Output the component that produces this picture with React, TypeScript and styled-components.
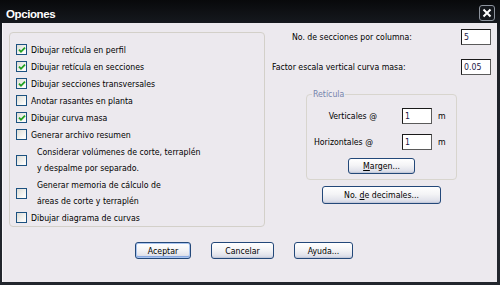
import React from 'react';
import styled, {createGlobalStyle} from 'styled-components';

const GlobalStyle = createGlobalStyle`
  html, body {
    margin: 0;
    padding: 0;
    background: #1b1f25;
  }
  body {
    font-family: "DejaVu Sans Condensed", "Liberation Sans", Arial, sans-serif;
    font-stretch: condensed;
    font-size: 8.7px;
    color: #000;
  }
`;

const Window = styled.div`
  width: 500px;
  height: 285px;
  box-sizing: border-box;
  display: flex;
  flex-direction: column;
  padding: 0 3px 3px;
  background: linear-gradient(#08090b, #1c2027 12%, #22262d);
`;

const TitleBar = styled.div`
  height: 23px;
  display: flex;
  align-items: center;
  justify-content: space-between;
  padding: 0 2px 0 3px;
`;

const Title = styled.span`
  margin-top: 4px;
  font-family: "Liberation Sans", Arial, sans-serif;
  font-weight: bold;
  font-size: 11.5px;
  letter-spacing: -0.4px;
  color: #fff;
`;

const CloseButton = styled.div`
  width: 16px;
  height: 16px;
  margin-top: 3px;
  box-sizing: border-box;
  display: flex;
  align-items: center;
  justify-content: center;
  border: 1px solid #8e949e;
  border-radius: 3px;
  background: #15181d;
`;

const Body = styled.div`
  flex: 1;
  display: flex;
  flex-direction: column;
  padding: 6px 5px 0 6px;
  background: #ece9ee;
  border-left: 1px solid #f8f7f9;
  margin-left: -1px;
`;

const Main = styled.div`
  display: flex;
  align-items: flex-start;
`;

const GroupBox = styled.div`
  width: 256px;
  height: 195px;
  margin-top: 3px;
  box-sizing: border-box;
  padding: 8px 0 0 6px;
  border: 1px solid #d3d0c9;
  border-radius: 4px;
  display: flex;
  flex-direction: column;
`;

const CheckRow = styled.label<{$lines?: number}>`
  display: flex;
  align-items: center;
  height: ${p => (p.$lines === 2 ? 32 : 17)}px;
  margin-top: ${p => (p.$lines === 2 ? 1 : 0)}px;
  white-space: nowrap;
`;

const Box = styled.span`
  width: 11px;
  height: 11px;
  flex: 0 0 11px;
  box-sizing: border-box;
  border: 1px solid #1c5180;
  background: linear-gradient(135deg, #dcdcd6, #fbfbf9 80%);
  display: flex;
  align-items: center;
  justify-content: center;
`;

const CheckText = styled.span<{$lines?: number}>`
  margin-left: ${p => (p.$lines === 2 ? 10 : 4)}px;
  line-height: 16px;
`;

const RightCol = styled.div`
  width: 219px;
  margin-left: 7px;
  display: flex;
  flex-direction: column;
`;

const FieldRow = styled.div<{$top?: number}>`
  display: flex;
  align-items: center;
  height: 16px;
  margin-top: ${p => p.$top || 0}px;
`;

const Label = styled.span<{$width?: number; $pad?: number}>`
  ${p => (p.$width ? `width: ${p.$width}px; flex: 0 0 ${p.$width}px; text-align: right;` : '')}
  padding-right: ${p => p.$pad || 0}px;
  box-sizing: border-box;
  white-space: nowrap;
`;

const TextBox = styled.div<{$left?: number}>`
  width: 30px;
  height: 16px;
  box-sizing: border-box;
  margin-left: ${p => (p.$left === undefined ? 'auto' : `${p.$left}px`)};
  padding: 1px 0 0 2px;
  border: 1px solid #1a1a1a;
  border-right-color: #5a5a5a;
  border-bottom-color: #5a5a5a;
  background: #fff;
  color: #231a4a;
  line-height: 12px;
`;

const Unit = styled.span`
  margin-left: 6px;
`;

const Reticula = styled.div`
  position: relative;
  width: 151px;
  height: 86px;
  margin: 19px 0 0 34px;
  box-sizing: border-box;
  padding-top: 13px;
  border: 1px solid #d8d5ce;
  border-radius: 4px;
  display: flex;
  flex-direction: column;
`;

const Legend = styled.span`
  position: absolute;
  top: -7px;
  left: 5px;
  padding: 0 1px;
  background: #ece9ee;
  color: #7584ac;
  line-height: 12px;
`;

const Button = styled.div<{$width: number; $height?: number; $default?: boolean}>`
  width: ${p => p.$width}px;
  height: ${p => p.$height || 17}px;
  box-sizing: border-box;
  display: flex;
  align-items: center;
  justify-content: center;
  border: 1px solid #234879;
  border-radius: 3px;
  background: linear-gradient(#ffffff, #f4f4f6 45%, #e3e4ec 80%, #cdd2e2);
  box-shadow: ${p =>
    p.$default ? 'inset 0 0 0 1px #a9c4ef, inset 0 -1px 0 1px #88a8e0' : 'inset 0 -1px 0 #c4c9d9'};
  white-space: nowrap;
`;

const CenterButton = styled(Button)<{$top: number; $left?: number}>`
  margin-top: ${p => p.$top}px;
  ${p => (p.$left !== undefined ? `margin-left: ${p.$left}px;` : 'align-self: center;')}
`;

const ButtonRow = styled.div`
  display: flex;
  gap: 20px;
  margin: 15px 0 0 126px;
`;

const Check = () => (
  <svg width="8" height="8" viewBox="0 0 8 8">
    <path d="M1 3.6 L3 5.8 L7 1.6" fill="none" stroke="#21a121" strokeWidth="1.8" />
  </svg>
);

const options: {text: string[]; checked: boolean}[] = [
  {text: ['Dibujar retícula en perfil'], checked: true},
  {text: ['Dibujar retícula en secciones'], checked: true},
  {text: ['Dibujar secciones transversales'], checked: true},
  {text: ['Anotar rasantes en planta'], checked: false},
  {text: ['Dibujar curva masa'], checked: true},
  {text: ['Generar archivo resumen'], checked: false},
  {text: ['Considerar volúmenes de corte, terraplén', 'y despalme por separado.'], checked: false},
  {text: ['Generar memoria de cálculo de', 'áreas de corte y terraplén'], checked: false},
  {text: ['Dibujar diagrama de curvas'], checked: false},
];

const App = () => (
  <>
    <GlobalStyle />
    <Window>
      <TitleBar>
        <Title>Opciones</Title>
        <CloseButton>
          <svg width="10" height="10" viewBox="0 0 10 10">
            <path d="M1.5 1.5 L8.5 8.5 M8.5 1.5 L1.5 8.5" stroke="#fff" strokeWidth="2" />
          </svg>
        </CloseButton>
      </TitleBar>
      <Body>
        <Main>
          <GroupBox>
            {options.map(o => (
              <CheckRow key={o.text[0]} $lines={o.text.length}>
                <Box>{o.checked && <Check />}</Box>
                <CheckText $lines={o.text.length}>
                  {o.text.map((t, i) => (
                    <React.Fragment key={t}>
                      {i > 0 && <br />}
                      {t}
                    </React.Fragment>
                  ))}
                </CheckText>
              </CheckRow>
            ))}
          </GroupBox>
          <RightCol>
            <FieldRow>
              <Label $width={140}>No. de secciones por columna:</Label>
              <TextBox>5</TextBox>
            </FieldRow>
            <FieldRow $top={14}>
              <Label>Factor escala vertical curva masa:</Label>
              <TextBox>0.05</TextBox>
            </FieldRow>
            <Reticula>
              <Legend>Retícula</Legend>
              <FieldRow>
                <Label $width={70}>Verticales @</Label>
                <TextBox $left={25}>1</TextBox>
                <Unit>m</Unit>
              </FieldRow>
              <FieldRow $top={10}>
                <Label $width={70} $pad={4}>Horizontales @</Label>
                <TextBox $left={25}>1</TextBox>
                <Unit>m</Unit>
              </FieldRow>
              <CenterButton $width={67} $height={16} $top={8}>
                <span><u>M</u>argen...</span>
              </CenterButton>
            </Reticula>
            <CenterButton $width={119} $height={18} $top={6} $left={50}>
              <span>No. <u>d</u>e decimales...</span>
            </CenterButton>
          </RightCol>
        </Main>
        <ButtonRow>
          <Button $width={56} $default>Aceptar</Button>
          <Button $width={63}>Cancelar</Button>
          <Button $width={59}>Ayuda...</Button>
        </ButtonRow>
      </Body>
    </Window>
  </>
);

export default App;
